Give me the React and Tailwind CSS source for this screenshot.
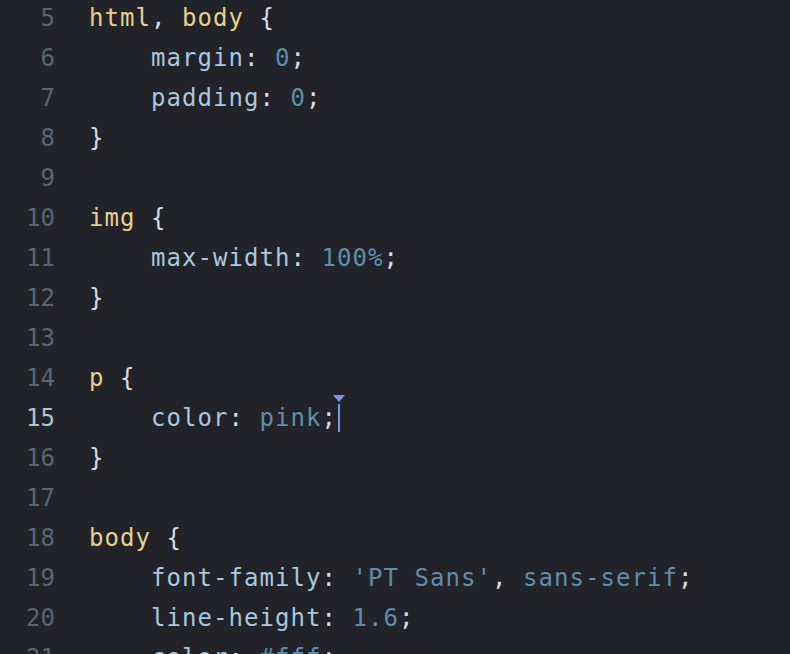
import React from 'react';

const S = 'text-[#e6d18c]';
const P = 'text-[#a9c7df]';
const V = 'text-[#5e8ea9]';
const W = 'text-[#d6dbe1]';

const lines = [
  { n: 5, t: [[S, 'html'], [W, ', '], [S, 'body'], [W, ' {']] },
  { n: 6, t: [[P, '    margin'], [W, ': '], [V, '0'], [W, ';']] },
  { n: 7, t: [[P, '    padding'], [W, ': '], [V, '0'], [W, ';']] },
  { n: 8, t: [[W, '}']] },
  { n: 9, t: [] },
  { n: 10, t: [[S, 'img'], [W, ' {']] },
  { n: 11, t: [[P, '    max-width'], [W, ': '], [V, '100%'], [W, ';']] },
  { n: 12, t: [[W, '}']] },
  { n: 13, t: [] },
  { n: 14, t: [[S, 'p'], [W, ' {']] },
  { n: 15, t: [[P, '    color'], [W, ': '], [V, 'pink'], [W, ';']], cursor: true },
  { n: 16, t: [[W, '}']] },
  { n: 17, t: [] },
  { n: 18, t: [[S, 'body'], [W, ' {']] },
  { n: 19, t: [[P, '    font-family'], [W, ': '], [V, "'PT Sans'"], [W, ', '], [V, 'sans-serif'], [W, ';']] },
  { n: 20, t: [[P, '    line-height'], [W, ': '], [V, '1.6'], [W, ';']] },
  { n: 21, t: [[P, '    color'], [W, ': '], [V, '#fff'], [W, ';']] },
];

const App = () => {
  return (
    <div className="w-[790px] h-[654px] overflow-hidden bg-[#212329] font-['DejaVu_Sans_Mono',monospace] text-[24px] leading-[40px] tracking-[1.05px]">
      <div className="-mt-[2px]">
        {lines.map(line => (
          <div key={line.n} className="flex h-[40px]">
            <div
              className={`w-[55px] text-right tracking-normal ${
                line.cursor ? 'text-[#b6c2cc]' : 'text-[#5b6470]'
              }`}
            >
              {line.n}
            </div>
            <div className="pl-[34px] whitespace-pre flex items-center">
              {line.t.map(([cls, text], i) => (
                <span key={i} className={cls}>{text}</span>
              ))}
              {line.cursor && (
                <span className="relative ml-[1px] inline-block w-[2px] h-[28px] bg-[#7f95ea]">
                  <span className="absolute -top-[9px] -left-[5px] w-0 h-0 border-l-[6px] border-r-[6px] border-t-[7px] border-l-transparent border-r-transparent border-t-[#7f95ea]" />
                </span>
              )}
            </div>
          </div>
        ))}
      </div>
    </div>
  );
};

export default App;
